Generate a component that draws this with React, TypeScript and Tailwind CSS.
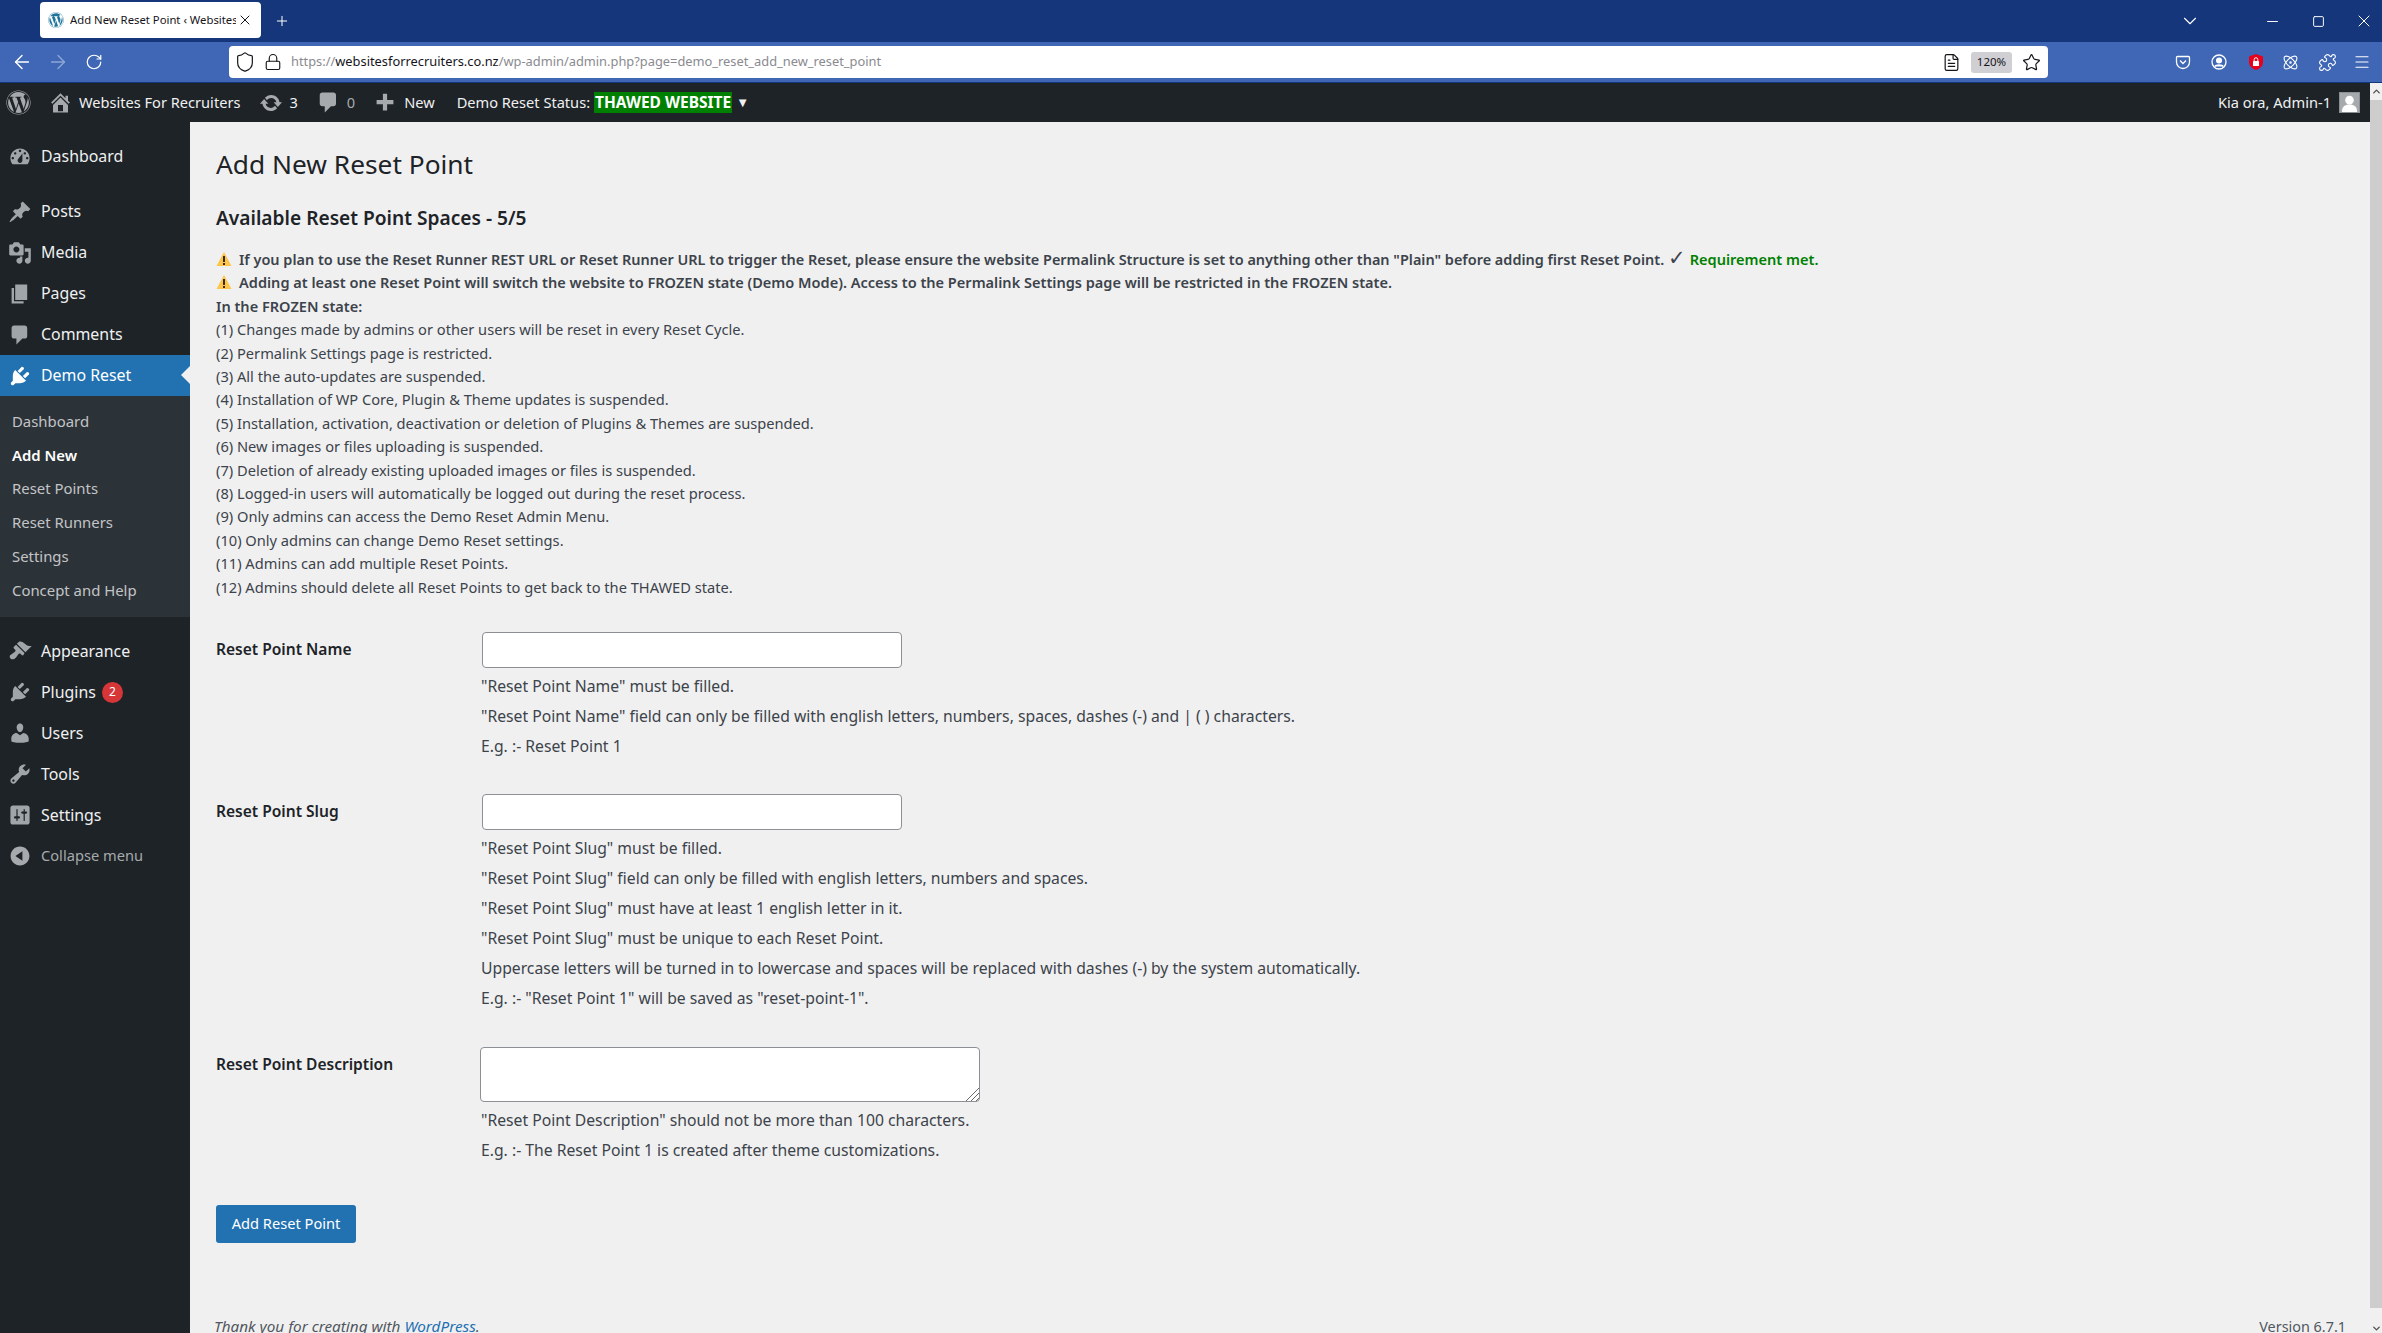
import { ArrowLeft, ArrowRight, Atom, ChevronDown, ChevronUp, FileText, Lock, Menu, Minus, Plus, Puzzle, RotateCw, Shield, Square, Star, X } from 'lucide-react'
import { FaWordpress } from 'react-icons/fa'
import type { ReactNode } from 'react'

// dashicons paths, 20x20 box
const icons = {
  dashboard:
    'M3.76 16h12.48c1.1-1.37 1.76-3.11 1.76-5 0-4.42-3.58-8-8-8s-8 3.58-8 8c0 1.89.66 3.63 1.76 5zM10 4c.55 0 1 .45 1 1s-.45 1-1 1-1-.45-1-1 .45-1 1-1zM6 6c.55 0 1 .45 1 1s-.45 1-1 1-1-.45-1-1 .45-1 1-1zm8 0c.55 0 1 .45 1 1s-.45 1-1 1-1-.45-1-1 .45-1 1-1zm-5.37 5.55L12 7v6c0 1.1-.9 2-2 2s-2-.9-2-2c0-.57.24-1.08.63-1.45zM4 10c.55 0 1 .45 1 1s-.45 1-1 1-1-.45-1-1 .45-1 1-1zm12 0c.55 0 1 .45 1 1s-.45 1-1 1-1-.45-1-1 .45-1 1-1z',
  post: 'M10.44 3.02l1.82-1.82 6.36 6.35-1.83 1.82c-1.05-.68-2.48-.57-3.41.36l-.75.75c-.92.93-1.04 2.35-.35 3.41l-1.83 1.82-2.41-2.41-2.8 2.79c-.42.42-3.38 2.71-3.8 2.29s1.86-3.39 2.28-3.81l2.79-2.79L4.1 9.36l1.83-1.82c1.05.69 2.48.57 3.4-.36l.75-.75c.93-.92 1.05-2.35.36-3.41z',
  media:
    'M13 11V4c0-.55-.45-1-1-1h-1.67L9 1H5L3.67 3H2c-.55 0-1 .45-1 1v7c0 .55.45 1 1 1h10c.55 0 1-.45 1-1zM7 4.5c1.38 0 2.5 1.12 2.5 2.5S8.38 9.5 7 9.5 4.5 8.38 4.5 7 5.62 4.5 7 4.5zM14 6h5v10.5c0 1.38-1.12 2.5-2.5 2.5S14 17.88 14 16.5s1.12-2.5 2.5-2.5c.17 0 .34.02.5.05V9h-3V6zm-4 8.05V13h2v3.5c0 1.38-1.12 2.5-2.5 2.5S7 17.88 7 16.5 8.12 14 9.5 14c.17 0 .34.02.5.05z',
  page: 'M6 15V2h10v13H6zm-1 1h8v2H3V5h2v11z',
  comment: 'M5 2h9c1.1 0 2 .9 2 2v7c0 1.1-.9 2-2 2h-2l-5 5v-5H5c-1.1 0-2-.9-2-2V4c0-1.1.9-2 2-2z',
  plugin:
    'M13.11 4.36L9.87 7.6 8 5.73l3.24-3.24c.35-.34 1.05-.2 1.56.32.52.51.66 1.21.31 1.55zm-8 1.77l.91-1.12 9.01 9.01-1.19.84c-.71.71-2.63 1.16-3.82 1.16H6.14L4.9 17.26c-.59.59-1.54.59-2.12 0-.59-.58-.59-1.53 0-2.12l1.24-1.24v-3.88c0-1.13.4-3.19 1.09-3.89zm7.26 3.97l3.24-3.24c.34-.35 1.04-.21 1.55.31.52.51.66 1.21.31 1.55l-3.24 3.25z',
  brush:
    'M14.48 11.06L7.41 3.99l1.5-1.5c.5-.56 2.3-.47 3.51.32 1.21.8 1.43 1.28 2.91 2.1 1.18.64 2.45 1.26 4.45.85zm-.71.71L6.7 4.7 4.93 6.47c-.39.39-.39 1.02 0 1.41l1.06 1.06c.39.39.39 1.03 0 1.42-.6.6-1.43 1.11-2.21 1.69-.35.26-.7.53-1.01.84C1.43 13.23.84 15.01 2.08 16.26c1.25 1.25 3.03.66 4.36-.66.31-.31.58-.66.85-1.02.57-.78 1.08-1.61 1.69-2.21.39-.39 1.02-.39 1.41 0l1.06 1.06c.39.39 1.02.39 1.41 0z',
  users:
    'M10 9.25c-2.27 0-2.73-3.44-2.73-3.44C7 4.02 7.82 2 9.97 2c2.16 0 2.98 2.02 2.71 3.81 0 0-.41 3.44-2.68 3.44zm0 2.57L12.72 10c2.39 0 4.52 2.33 4.52 4.53v2.49s-3.65 1.13-7.24 1.13c-3.65 0-7.24-1.13-7.24-1.13v-2.49c0-2.25 1.94-4.48 4.47-4.48z',
  tools:
    'M16.68 9.77c-1.34 1.34-3.3 1.67-4.95.99l-5.41 6.52c-.99.99-2.59.99-3.58 0s-.99-2.59 0-3.57l6.52-5.42c-.68-1.65-.35-3.61.99-4.95 1.28-1.28 3.12-1.62 4.72-1.06l-2.89 2.89 2.82 2.82 2.86-2.87c.53 1.58.18 3.39-1.08 4.65zM3.81 16.21c.4.39 1.04.39 1.43 0 .4-.4.4-1.04 0-1.43-.39-.4-1.03-.4-1.43 0-.39.39-.39 1.03 0 1.43z',
  settings:
    'M18 16V4c0-1.1-.9-2-2-2H4c-1.1 0-2 .9-2 2v12c0 1.1.9 2 2 2h12c1.1 0 2-.9 2-2zM8 11h1c.55 0 1 .45 1 1s-.45 1-1 1H8v1.5c0 .28-.22.5-.5.5s-.5-.22-.5-.5V13H6c-.55 0-1-.45-1-1s.45-1 1-1h1V5.5c0-.28.22-.5.5-.5s.5.22.5.5V11zm5-2h-1c-.55 0-1-.45-1-1s.45-1 1-1h1V5.5c0-.28.22-.5.5-.5s.5.22.5.5V7h1c.55 0 1 .45 1 1s-.45 1-1 1h-1v5.5c0 .28-.22.5-.5.5s-.5-.22-.5-.5V9z',
  collapse: 'M10 2.16c4.33 0 7.84 3.51 7.84 7.84s-3.51 7.84-7.84 7.84S2.16 14.33 2.16 10 5.71 2.16 10 2.16zm2 11.72V6.12L6.18 9.97z',
  home: 'M16 8.5l1.53 1.53-1.06 1.06L10 4.62l-6.47 6.47-1.06-1.06L10 2.5l4 4v-2h2v4zm-6-2.46l6 5.99V18H4v-5.97zM12 17v-5H8v5h4z',
  update:
    'M10.2 3.28c3.53 0 6.43 2.61 6.92 6h2.08l-3.5 4-3.5-4h2.32c-.45-1.97-2.21-3.45-4.32-3.45-1.45 0-2.73.71-3.54 1.78L4.95 5.66C6.23 4.2 8.11 3.28 10.2 3.28zm-.4 13.44c-3.52 0-6.43-2.61-6.92-6H.8l3.5-4c1.17 1.33 2.33 2.67 3.5 4H5.48c.45 1.97 2.21 3.45 4.32 3.45 1.45 0 2.73-.71 3.54-1.78l1.71 1.95c-1.28 1.46-3.15 2.38-5.25 2.38z',
  plus: 'M17 7.5v3.5h-5.25v5.25h-3.5V11H3V7.5h5.25V2.25h3.5V7.5z',
}

function Dash({ d, className }: { d: string; className?: string }) {
  return (
    <svg viewBox="0 0 20 20" fill="currentColor" fillRule="evenodd" className={className}>
      <path d={d} />
    </svg>
  )
}

function Warn() {
  return (
    <svg viewBox="0 0 16 16" className="inline-block w-[16px] h-[16px] mr-[7px] align-[-2px]">
      <path d="M8 1 15.5 15H.5z" fill="#fdc64a" />
      <rect x="7" y="5" width="2" height="6" fill="#3a2c10" />
      <rect x="7" y="12" width="2" height="2" fill="#3a2c10" />
    </svg>
  )
}

function SideItem({ icon, label, badge }: { icon: string; label: string; badge?: string }) {
  return (
    <div className="flex items-center h-[41px] pl-[8px]">
      <Dash d={icon} className="w-[24px] h-[24px] text-[#a0a5aa]" />
      <span className="ml-[9px] pt-px text-[#f0f0f1]">{label}</span>
      {badge && (
        <span className="ml-[6px] w-[21px] h-[21px] rounded-full bg-[#d63638] text-white text-[12px] flex items-center justify-center">
          {badge}
        </span>
      )}
    </div>
  )
}

function SubItem({ label, active }: { label: string; active?: boolean }) {
  return (
    <div className={active ? 'h-[33.8px] flex items-center pl-[12px] text-white font-semibold' : 'h-[33.8px] flex items-center pl-[12px] text-[#c3c4c7]'}>
      {label}
    </div>
  )
}

function Sidebar() {
  return (
    <aside className="w-[190px] shrink-0 bg-[#1d2327] pt-[14px] text-[15.9px] font-['Noto_Sans',sans-serif]">
      <SideItem icon={icons.dashboard} label="Dashboard" />
      <div className="h-[14px]" />
      <SideItem icon={icons.post} label="Posts" />
      <SideItem icon={icons.media} label="Media" />
      <SideItem icon={icons.page} label="Pages" />
      <SideItem icon={icons.comment} label="Comments" />
      <div className="relative flex items-center h-[41px] pl-[8px] bg-[#2271b1] text-white">
        <Dash d={icons.plugin} className="w-[24px] h-[24px]" />
        <span className="ml-[9px] pt-px">Demo Reset</span>
        <span className="absolute right-0 top-[11px] border-y-[9px] border-r-[9px] border-y-transparent border-r-[#f0f0f1]" />
      </div>
      <div className="bg-[#2c3338] pt-[8px] pb-[10px] text-[14.9px]">
        <SubItem label="Dashboard" />
        <SubItem label="Add New" active />
        <SubItem label="Reset Points" />
        <SubItem label="Reset Runners" />
        <SubItem label="Settings" />
        <SubItem label="Concept and Help" />
      </div>
      <div className="h-[14px]" />
      <SideItem icon={icons.brush} label="Appearance" />
      <SideItem icon={icons.plugin} label="Plugins" badge="2" />
      <SideItem icon={icons.users} label="Users" />
      <SideItem icon={icons.tools} label="Tools" />
      <SideItem icon={icons.settings} label="Settings" />
      <div className="flex items-center h-[41px] pl-[8px] text-[#a7aaad] text-[14.65px]">
        <Dash d={icons.collapse} className="w-[24px] h-[24px]" />
        <span className="ml-[9px]">Collapse menu</span>
      </div>
    </aside>
  )
}

function BrowserChrome() {
  return (
    <div className="shrink-0 font-['Noto_Sans',sans-serif]">
      <div className="h-[42px] bg-[#15367a] flex items-center relative text-white">
        <div className="ml-[40px] mt-[-2px] w-[221px] h-[36px] bg-white rounded-[4px] flex items-center pl-[8px] text-[11.3px] text-[#15141a]">
          <FaWordpress className="w-[16px] h-[16px] text-[#21759b] shrink-0" />
          <span className="ml-[6px] w-[166px] overflow-hidden whitespace-nowrap">Add New Reset Point ‹ Websites</span>
          <X size={16} strokeWidth={1.5} className="ml-px shrink-0" />
        </div>
        <Plus size={16} strokeWidth={1.5} className="ml-[13px]" />
        <div className="ml-auto flex items-center mr-[8px]">
          <ChevronDown size={22} strokeWidth={1.2} className="mr-[63px]" />
          <Minus size={17} strokeWidth={1.4} className="mr-[31px]" />
          <Square size={13} strokeWidth={1.8} className="mr-[29px]" />
          <X size={20} strokeWidth={1.2} />
        </div>
      </div>
      <div className="h-[41px] bg-[#3f67b5] border-b border-[#15367a] flex items-center text-white">
        <ArrowLeft size={22} strokeWidth={1.5} className="ml-[11px]" />
        <ArrowRight size={22} strokeWidth={1.5} className="ml-[14px] text-[#8ea6d6]" />
        <RotateCw size={18} strokeWidth={1.6} className="ml-[16px]" />
        <div className="ml-[126px] w-[1819px] h-[32px] bg-white rounded-[4px] flex items-center text-[#15141a]">
          <Shield size={22} strokeWidth={1.3} className="ml-[5px]" />
          <Lock size={18} strokeWidth={1.5} className="ml-[8px]" />
          <span className="ml-[9px] text-[12.85px] text-[#8a8a90] whitespace-nowrap">
            https://<span className="text-[#15141a]">websitesforrecruiters.co.nz</span>/wp-admin/admin.php?page=demo_reset_add_new_reset_point
          </span>
          <FileText size={19} strokeWidth={1.5} className="ml-auto" />
          <span className="ml-[10px] w-[41px] h-[21px] rounded-[3px] bg-[#d0d0d4] text-[11.5px] flex items-center justify-center">120%</span>
          <Star size={19} strokeWidth={1.5} className="ml-[10px] mr-[7px]" />
        </div>
        <svg viewBox="0 0 16 16" className="ml-[127px] w-[16px] h-[16px]" fill="none" stroke="white" strokeWidth="1.3">
          <path d="M2.5 2.5h11a1 1 0 0 1 1 1V8a6.5 6.5 0 0 1-13 0V3.5a1 1 0 0 1 1-1z" />
          <path d="M5 6.5 8 9.5 11 6.5" />
        </svg>
        <svg viewBox="0 0 16 16" className="ml-[20px] w-[16px] h-[16px]" fill="none" stroke="white" strokeWidth="1.3">
          <circle cx="8" cy="8" r="7" />
          <circle cx="8" cy="6.5" r="2.4" fill="white" />
          <path d="M3.8 12.5c1-2 7.4-2 8.4 0" fill="white" />
        </svg>
        <svg viewBox="0 0 16 16" className="ml-[21px] w-[16px] h-[18px]">
          <path d="M8 0 15 2.5V8c0 4-3 6.5-7 8-4-1.500-7-4-7-8V2.500z" fill="#e8001c" />
          <rect x="5" y="7" width="6" height="5" rx="0.5" fill="white" />
          <path d="M6.200 7V5.500a1.800 1.800 0 0 1 3.600 0V7" fill="none" stroke="white" strokeWidth="1" />
        </svg>
        <Atom size={17} strokeWidth={1.5} className="ml-[18px]" />
        <Puzzle size={19} strokeWidth={1.4} className="ml-[19px]" />
        <Menu size={18} strokeWidth={1.6} className="ml-[16px]" />
      </div>
    </div>
  )
}

function AdminBar() {
  return (
    <div className="h-[39px] shrink-0 bg-[#1d2327] flex items-center text-[14.6px] text-[#f0f0f1] font-['Noto_Sans',sans-serif] whitespace-nowrap">
      <FaWordpress className="ml-[6px] w-[25px] h-[25px] text-[#a7aaad]" />
      <Dash d={icons.home} className="ml-[17px] w-[25px] h-[25px] text-[#a7aaad]" />
      <span className="ml-[6px]">Websites For Recruiters</span>
      <Dash d={icons.update} className="ml-[19px] w-[24px] h-[24px] text-[#a7aaad]" />
      <span className="ml-[6px]">3</span>
      <Dash d={icons.comment} className="ml-[18px] w-[25px] h-[25px] text-[#a7aaad]" />
      <span className="ml-[6px] text-[#a7aaad]">0</span>
      <Dash d={icons.plus} className="ml-[18px] w-[24px] h-[24px] text-[#a7aaad]" />
      <span className="ml-[7px]">New</span>
      <span className="ml-[22px]">Demo Reset Status:</span>
      <span className="ml-[4px] px-px h-[21px] leading-[21px] text-[15.5px] bg-[#008000] text-white font-bold">THAWED WEBSITE</span>
      <span className="ml-[4px] text-[13px]">▼</span>
      <span className="ml-auto">Kia ora, Admin-1</span>
      <div className="ml-[8px] mr-[10px] w-[21px] h-[21px] bg-[#a7aaad] border border-[#8c8f94] relative overflow-hidden flex justify-center">
        <svg viewBox="0 0 20 20" fill="white" className="w-full h-full">
          <circle cx="10" cy="7.500" r="4.500" />
          <path d="M2 20c0-6 3-8 8-8s8 2 8 8z" />
        </svg>
      </div>
    </div>
  )
}

function Scrollbar() {
  return (
    <div className="w-[12px] shrink-0 bg-[#f0f0f0] flex flex-col items-center text-[#505050]">
      <ChevronUp size={11} strokeWidth={3} className="mt-[3px] shrink-0" />
      <div className="w-full h-[1208px] mt-[3px] shrink-0 bg-[#cdcdcd]" />
      <ChevronDown size={11} strokeWidth={3} className="mt-[15px] shrink-0" />
    </div>
  )
}

function Help({ lines }: { lines: string[] }) {
  return (
    <div className="mt-[3px] text-[15.72px]">
      {lines.map((l) => (
        <p key={l} className="leading-[30px] whitespace-nowrap">{l}</p>
      ))}
    </div>
  )
}

function FormRow({ label, children, className }: { label: string; children: ReactNode; className: string }) {
  return (
    <div className={`flex ${className}`}>
      <label className="w-[265px] shrink-0 text-[15.55px] font-semibold text-[#1d2327] leading-[35px]">{label}</label>
      <div>{children}</div>
    </div>
  )
}

const rules = [
  '(1) Changes made by admins or other users will be reset in every Reset Cycle.',
  '(2) Permalink Settings page is restricted.',
  '(3) All the auto-updates are suspended.',
  '(4) Installation of WP Core, Plugin & Theme updates is suspended.',
  '(5) Installation, activation, deactivation or deletion of Plugins & Themes are suspended.',
  '(6) New images or files uploading is suspended.',
  '(7) Deletion of already existing uploaded images or files is suspended.',
  '(8) Logged-in users will automatically be logged out during the reset process.',
  '(9) Only admins can access the Demo Reset Admin Menu.',
  '(10) Only admins can change Demo Reset settings.',
  '(11) Admins can add multiple Reset Points.',
  '(12) Admins should delete all Reset Points to get back to the THAWED state.',
]

function Content() {
  return (
    <main className="flex-1 min-w-0 pl-[26px] pr-[24px] pt-[24px] bg-[#f0f0f1] text-[14.65px] text-[#3c434a] font-['Noto_Sans',sans-serif]">
      <h1 className="text-[26.3px] leading-[36px] text-[#1d2327]">Add New Reset Point</h1>
      <h2 className="mt-[23px] text-[19.15px] leading-[26px] font-semibold text-[#1d2327]">Available Reset Point Spaces - 5/5</h2>
      <div className="mt-[17px] leading-[23.4px]">
        <p className="h-[23.4px] font-semibold text-[14.47px]"><Warn />If you plan to use the Reset Runner REST URL or Reset Runner URL to trigger the Reset, please ensure the website Permalink Structure is set to anything other than "Plain" before adding first Reset Point. <span className="font-normal text-[21px] leading-[0]">✓</span> <span className="text-[#008000] text-[14.55px]">Requirement met.</span></p>
        <p className="h-[23.4px] font-semibold text-[14.56px]"><Warn />Adding at least one Reset Point will switch the website to FROZEN state (Demo Mode). Access to the Permalink Settings page will be restricted in the FROZEN state.</p>
        <p className="font-semibold text-[14.55px]">In the FROZEN state:</p>
        {rules.map((r) => (
          <p key={r}>{r}</p>
        ))}
      </div>
      <FormRow label="Reset Point Name" className="mt-[33px]">
        <input className="block ml-px w-[420px] h-[36px] bg-white border border-[#8c8f94] rounded-[4px]" />
        <Help lines={['"Reset Point Name" must be filled.', '"Reset Point Name" field can only be filled with english letters, numbers, spaces, dashes (-) and | ( ) characters.', 'E.g. :- Reset Point 1']} />
      </FormRow>
      <FormRow label="Reset Point Slug" className="mt-[33px]">
        <input className="block ml-px w-[420px] h-[36px] bg-white border border-[#8c8f94] rounded-[4px]" />
        <Help lines={['"Reset Point Slug" must be filled.', '"Reset Point Slug" field can only be filled with english letters, numbers and spaces.', '"Reset Point Slug" must have at least 1 english letter in it.', '"Reset Point Slug" must be unique to each Reset Point.', 'Uppercase letters will be turned in to lowercase and spaces will be replaced with dashes (-) by the system automatically.', 'E.g. :- "Reset Point 1" will be saved as "reset-point-1".']} />
      </FormRow>
      <FormRow label="Reset Point Description" className="mt-[34px]">
        <div className="relative -ml-px w-[500px] h-[55px]">
          <textarea className="block w-full h-full bg-white border border-[#8c8f94] rounded-[4px] resize-none" />
          <svg viewBox="0 0 14 14" className="absolute right-px bottom-px w-[14px] h-[14px]" stroke="#6b6b6b" strokeWidth="1">
            <path d="M14 1 1 14M14 6 6 14M14 11 11 14" />
          </svg>
        </div>
        <Help lines={['"Reset Point Description" should not be more than 100 characters.', 'E.g. :- The Reset Point 1 is created after theme customizations.']} />
      </FormRow>
      <button className="block mt-[40px] w-[140px] h-[38px] bg-[#2271b1] text-white rounded-[3px]">Add Reset Point</button>
      <div className="mt-[72px] flex justify-between leading-[23px] text-[#50575e]">
        <span className="italic -ml-[2px] text-[15.3px]">Thank you for creating with <span className="text-[#2271b1] underline">WordPress</span>.</span>
        <span className="text-[14.4px]">Version 6.7.1</span>
      </div>
    </main>
  )
}

export default function App() {
  return (
    <div className="w-[2382px] h-[1333px] overflow-hidden flex flex-col bg-[#f0f0f1]">
      <BrowserChrome />
      <div className="flex flex-1 min-h-0">
        <div className="flex-1 min-w-0 flex flex-col">
          <AdminBar />
          <div className="flex flex-1 min-h-0">
            <Sidebar />
            <Content />
          </div>
        </div>
        <Scrollbar />
      </div>
    </div>
  )
}
